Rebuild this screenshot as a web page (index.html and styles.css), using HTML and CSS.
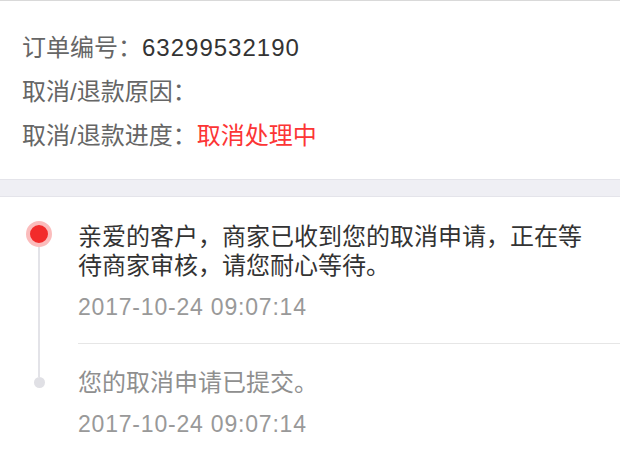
FILE: index.html
```html
<!DOCTYPE html>
<html lang="zh-CN">

<head>
    <meta charset="UTF-8">
    <meta name="viewport" content="width=device-width, initial-scale=1.0">
    <title>取消/退款详情</title>
    <link rel="stylesheet" href="styles.css">
</head>

<body>
    <div class="order-info">
        <p><span class="label">订单编号：</span><span class="order-no">63299532190</span></p>
        <p><span class="label">取消/退款原因：</span></p>
        <p><span class="label">取消/退款进度：</span><span class="status">取消处理中</span></p>
    </div>

    <div class="gap"></div>

    <div class="timeline">
        <div class="step current">
            <div class="step-axis">
                <span class="dot"></span>
                <span class="line"></span>
            </div>
            <div class="step-body">
                <p class="step-text">亲爱的客户，商家已收到您的取消申请，正在等待商家审核，请您耐心等待。</p>
                <p class="step-time">2017-10-24 09:07:14</p>
            </div>
        </div>
        <div class="step">
            <div class="step-axis">
                <span class="line"></span>
                <span class="dot"></span>
            </div>
            <div class="step-body last">
                <p class="step-text">您的取消申请已提交。</p>
                <p class="step-time">2017-10-24 09:07:14</p>
            </div>
        </div>
    </div>
</body>

</html>
```

FILE: styles.css
```css
body {
    margin: 0;
    padding: 0;
    background: #fff;
    font-family: "Liberation Sans", "Noto Sans CJK SC", sans-serif;
    color: #333;
}

p {
    margin: 0;
}

/* 订单信息 */
.order-info {
    border-top: 1px solid #d9d9d9;
    padding: 25px 0 21px 22px;
    font-size: 24px;
    line-height: 44px;
}

.label {
    color: #666;
}

.order-no {
    color: #333;
    letter-spacing: 1px;
}

.status {
    color: #fc3535;
}

.gap {
    height: 16px;
    background: #efeff4;
    border-top: 1px solid #e4e4ea;
    border-bottom: 1px solid #e4e4ea;
}

/* 进度时间轴 */
.step {
    display: flex;
}

.step-axis {
    width: 78px;
    flex-shrink: 0;
    display: flex;
    flex-direction: column;
    align-items: center;
}

.step-axis .line {
    width: 2px;
    background: #e3e3e8;
}

.step.current .step-axis {
    padding-top: 24px;
}

.step.current .line {
    flex: 1;
}

.step.current .dot {
    width: 18px;
    height: 18px;
    border-radius: 50%;
    background: #f22b2b;
    border: 4px solid #fbbcbc;
}

.step .dot {
    width: 11px;
    height: 11px;
    border-radius: 50%;
    background: #e0e0e5;
}

.step .line {
    height: 33px;
}

.step-body {
    flex: 1;
    padding: 25px 0 21px;
    border-bottom: 1px solid #e6e6e6;
}

.step-body.last {
    padding-top: 24px;
    border-bottom: none;
}

.step-text {
    font-size: 24px;
    line-height: 29px;
    padding-right: 30px;
    color: #333;
}

.step:not(.current) .step-text {
    color: #8f8f8f;
}

.step-time {
    margin-top: 12px;
    font-size: 23px;
    line-height: 30px;
    color: #999;
    letter-spacing: 0.8px;
}
```
